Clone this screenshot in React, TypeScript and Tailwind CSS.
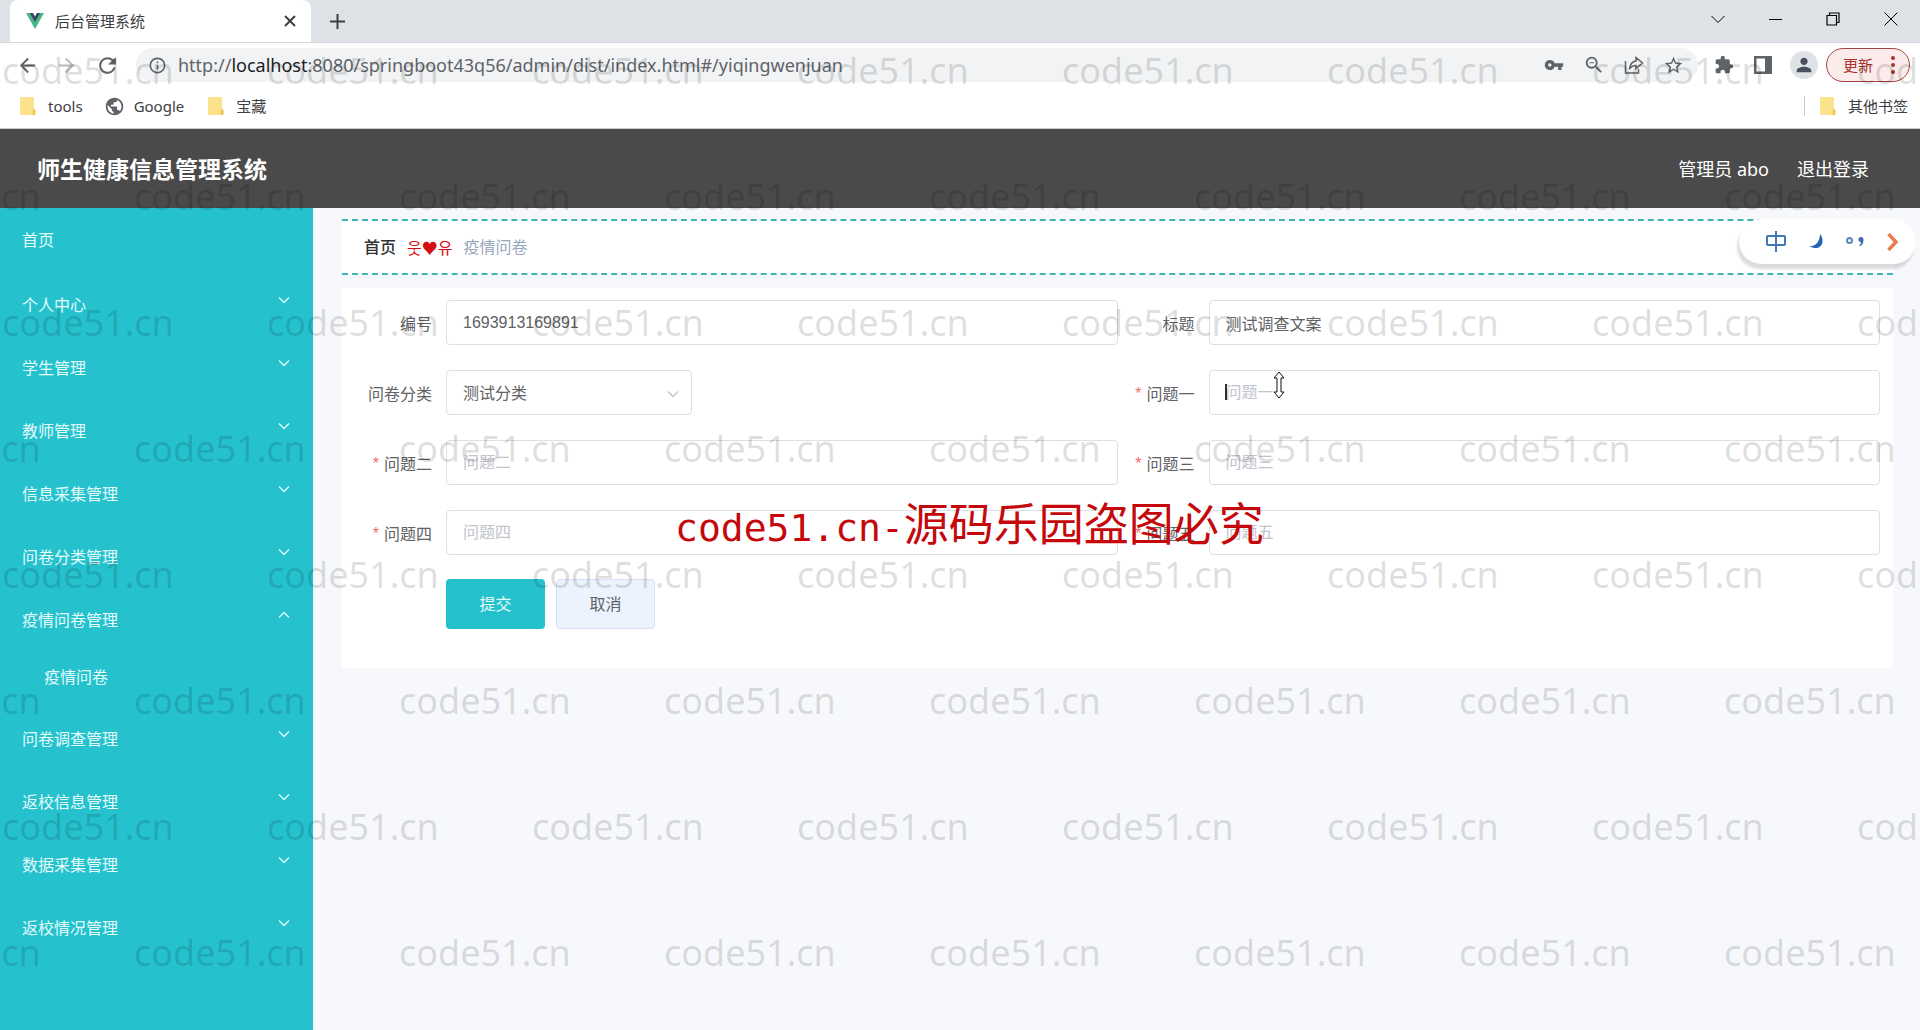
import React from "react";
import {
	MdArrowBack,
	MdArrowForward,
	MdExtension,
	MdInfoOutline,
	MdOutlineZoomOut,
	MdPerson,
	MdPublic,
	MdRefresh,
	MdStarBorder,
	MdVpnKey,
} from "react-icons/md";

const menus = [
	{ name: "个人中心" },
	{ name: "学生管理" },
	{ name: "教师管理" },
	{ name: "信息采集管理" },
	{ name: "问卷分类管理" },
	{ name: "疫情问卷管理", children: ["疫情问卷"] },
	{ name: "问卷调查管理" },
	{ name: "返校信息管理" },
	{ name: "数据采集管理" },
	{ name: "返校情况管理" },
];

function Chevron({ className = "", up = false }) {
	return (
		<svg
			className={className}
			width="12"
			height="8"
			viewBox="0 0 12 8"
			fill="none"
			stroke="currentColor"
			strokeWidth="1.3"
		>
			<path d={up ? "M1 6.5 6 1.5l5 5" : "M1 1.5l5 5 5-5"} />
		</svg>
	);
}

function Folder() {
	return (
		<svg width="16" height="18" viewBox="0 0 16 18">
			<path d="M0 1a1 1 0 0 1 1-1h12a1 1 0 0 1 1 1v11l1.500 1v4a1 1 0 0 1-1 1H1a1 1 0 0 1-1-1z" fill="#fce28d" />
			<path d="M12.500 18v-4.500l1.500-1.500 1.500 1v4a1 1 0 0 1-1 1z" fill="#f0ca5c" />
		</svg>
	);
}

function TabStrip() {
	return (
		<div className="flex h-[43px] items-end border-b border-[#d5d8dc] bg-[#dee1e6] pl-[10px] text-[#3c4043]">
			<div className="flex h-[42px] w-[301px] items-center rounded-t-lg bg-white pr-[11px] pl-4">
				<svg width="18" height="16" viewBox="0 0 18 16">
					<path d="M0 0h3.600L9 9.400 14.400 0H18L9 16z" fill="#42b883" />
					<path d="M3.600 0H7l2 3.500L11 0h3.400L9 9.400z" fill="#35495e" />
				</svg>
				<span className="ml-[11px] flex-1 text-[15px] leading-5">后台管理系统</span>
				<button aria-label="关闭标签页" className="p-1">
					<svg width="12" height="12" viewBox="0 0 12 12" stroke="currentColor" strokeWidth="2">
						<path d="M1 1l10 10M11 1 1 11" />
					</svg>
				</button>
			</div>
			<button aria-label="新标签页" className="mb-[13px] ml-[19px]">
				<svg width="15" height="15" viewBox="0 0 15 15" stroke="currentColor" strokeWidth="2">
					<path d="M7.500 0v15M0 7.500h15" />
				</svg>
			</button>
			<div className="mb-4 ml-auto flex gap-11 pr-[22px] text-black">
				<button aria-label="搜索标签页">
					<svg width="14" height="14" viewBox="0 0 14 14" fill="none" stroke="currentColor">
						<path d="M.5 4 7 10.500 13.500 4" />
					</svg>
				</button>
				<button aria-label="最小化">
					<svg width="13" height="14" viewBox="0 0 13 14" stroke="currentColor">
						<path d="M0 7.500h13" />
					</svg>
				</button>
				<button aria-label="还原">
					<svg width="14" height="14" viewBox="0 0 14 14" fill="none" stroke="currentColor" strokeWidth="1.200">
						<path d="M1 3.500h9.500V13H1zM3.500 3.500V1H13v9.500h-2.500" />
					</svg>
				</button>
				<button aria-label="关闭">
					<svg width="14" height="14" viewBox="0 0 14 14" stroke="currentColor">
						<path d="M.5.5l13 13M13.500.5l-13 13" />
					</svg>
				</button>
			</div>
		</div>
	);
}

function Toolbar() {
	return (
		<div className="flex h-11 items-center pr-[10px] pl-4 text-[#5f6368]">
			<button aria-label="后退">
				<MdArrowBack size={23} />
			</button>
			<button aria-label="前进" className="ml-4 text-[#b9bbbe]">
				<MdArrowForward size={23} />
			</button>
			<button aria-label="刷新" className="ml-[17px]">
				<MdRefresh size={25} />
			</button>
			<div className="ml-4 flex h-[34px] flex-1 items-center rounded-full bg-[#f1f3f4] pr-[14px] pl-3">
				<MdInfoOutline size={19} />
				<p className="ml-[11px] flex-1 text-[18px] leading-6">
					http://<span className="text-[#202124]">localhost</span>
					:8080/springboot43q56/admin/dist/index.html#/yiqingwenjuan
				</p>
				<div className="flex items-center gap-[19px]">
					<MdVpnKey size={20} />
					<MdOutlineZoomOut size={22} />
					<svg width="20" height="20" viewBox="0 0 20 20" fill="none" stroke="currentColor" strokeWidth="1.500">
						<path d="M1.500 6v12h13v-4" />
						<path d="M12 2.500 18.500 8 12 13.500v-3c-3 0-5 1-6.500 3.500.5-4.500 2.500-7.500 6.500-8z" />
					</svg>
					<MdStarBorder size={21} />
				</div>
			</div>
			<button aria-label="扩展程序" className="ml-4">
				<MdExtension size={20} />
			</button>
			<button aria-label="侧边栏" className="ml-5">
				<svg width="18" height="18" viewBox="0 0 18 18">
					<path d="M0 0h18v18H0zM2.500 2.500v13H11v-13z" fill="currentColor" fillRule="evenodd" />
				</svg>
			</button>
			<button
				aria-label="用户"
				className="ml-[18px] flex size-7 items-center justify-center rounded-full bg-[#dee1e6] text-[#47505c]"
			>
				<MdPerson size={22} />
			</button>
			<button className="ml-2 flex h-[34px] w-[84px] items-center justify-between rounded-full border border-[#a8443f] bg-[#fbeceb] pr-[14px] pl-4 text-[15px] text-[#a8322c]">
				更新
				<svg width="4" height="18" viewBox="0 0 4 18" fill="currentColor">
					<circle cx="2" cy="2" r="2" />
					<circle cx="2" cy="9" r="2" />
					<circle cx="2" cy="16" r="2" />
				</svg>
			</button>
		</div>
	);
}

function Bookmarks() {
	return (
		<div className="flex h-[42px] items-center border-b border-[#c8c8c8] pr-3 pb-[3px] pl-5 text-[15px] leading-5 text-[#3c4043]">
			<a href="#tools" className="flex items-center gap-3">
				<Folder />
				tools
			</a>
			<a href="#google" className="ml-[21px] flex items-center gap-[9px]">
				<MdPublic size={21} className="text-[#5f6368]" />
				Google
			</a>
			<a href="#treasure" className="ml-6 flex items-center gap-3">
				<Folder />
				宝藏
			</a>
			<a
				href="#other"
				className="ml-auto flex items-center gap-3 border-l border-[#c8cacd] pl-[15px]"
			>
				<Folder />
				其他书签
			</a>
		</div>
	);
}

function Sidebar() {
	return (
		<nav className="w-[313px] shrink-0 bg-[#25c2ce] text-base leading-6 text-[#e4fafb]">
			<a href="#/" className="flex h-[65px] items-center pb-0.5 pl-[22px]">
				首页
			</a>
			{menus.map((menu) => (
				<div key={menu.name}>
					<button className="flex h-[63px] w-full items-center justify-between pr-[23px] pl-[22px]">
						{menu.name}
						<Chevron className="mb-[10px]" up={!!menu.children} />
					</button>
					{menu.children?.map((child) => (
						<a
							key={child}
							href="#/yiqingwenjuan"
							className="flex h-14 items-center pb-1 pl-11"
						>
							{child}
						</a>
					))}
				</div>
			))}
		</nav>
	);
}

type FieldProps = {
	id: string;
	label: string;
	required?: boolean;
	children: React.ReactNode;
};

function Field({ id, label, required, children }: FieldProps) {
	return (
		<div className="flex h-[45px]">
			<label
				htmlFor={id}
				className="flex w-[91px] shrink-0 items-center justify-end gap-[5px] pt-[2px] pr-[14px] whitespace-nowrap"
			>
				{required && (
					<span className="font-['Liberation_Sans',sans-serif] text-[#f56c6c]">*</span>
				)}
				{label}
			</label>
			<div className="relative flex-1">{children}</div>
		</div>
	);
}

function TextInput({ id, value, placeholder }: { id: string; value?: string; placeholder?: string }) {
	return (
		<input
			id={id}
			type="text"
			defaultValue={value}
			placeholder={placeholder}
			className="h-full w-full rounded border border-[#dcdfe6] bg-white px-4 font-['Liberation_Sans','Noto_Sans_CJK_SC',sans-serif] outline-none placeholder:text-[#c0c4cc]"
		/>
	);
}

function SurveyForm() {
	return (
		<form
			className="mt-[13px] bg-white px-[13px] pt-3 pb-[39px] text-base leading-6 text-[#606266]"
			onSubmit={(e) => e.preventDefault()}
		>
			<div className="grid grid-cols-2 gap-y-[25px]">
				<Field id="uuid" label="编号">
					<TextInput id="uuid" value="1693913169891" />
				</Field>
				<Field id="title" label="标题">
					<TextInput id="title" value="测试调查文案" />
				</Field>
				<Field id="type" label="问卷分类">
					<div className="relative h-full w-[246px]">
						<select
							id="type"
							className="h-full w-full appearance-none rounded border border-[#dcdfe6] bg-white px-4 outline-none"
						>
							<option>测试分类</option>
						</select>
						<Chevron className="pointer-events-none absolute top-5 right-[13px] text-[#c0c4cc]" />
					</div>
				</Field>
				<Field id="q1" label="问题一" required>
					<TextInput id="q1" placeholder="问题一" />
					<span className="absolute top-[14px] left-4 h-4 w-0.5 bg-[#303133]" />
					{/* resize pointer */}
					<svg
						className="absolute top-px left-16"
						width="12"
						height="28"
						viewBox="0 0 12 28"
						fill="#fff"
						stroke="#111"
					>
						<path d="M6 1l5 6H8v14h3l-5 6-5-6h3V7H1z" />
					</svg>
				</Field>
				<Field id="q2" label="问题二" required>
					<TextInput id="q2" placeholder="问题二" />
				</Field>
				<Field id="q3" label="问题三" required>
					<TextInput id="q3" placeholder="问题三" />
				</Field>
				<Field id="q4" label="问题四" required>
					<TextInput id="q4" placeholder="问题四" />
				</Field>
				<Field id="q5" label="问题五" required>
					<TextInput id="q5" placeholder="问题五" />
				</Field>
			</div>
			<div className="mt-6 flex gap-[11px] pl-[91px]">
				<button
					type="submit"
					className="h-[50px] w-[99px] rounded bg-[#25c2ce] text-[#e4fafb]"
				>
					提交
				</button>
				<button
					type="button"
					className="h-[50px] w-[99px] rounded border border-[#d9dff0] bg-[#ebf4fe]"
				>
					取消
				</button>
			</div>
		</form>
	);
}

// floating input method bar
function ImeBar() {
	return (
		<div className="absolute top-[219px] right-1 flex h-[45px] w-[177px] items-center justify-between rounded-full bg-white pr-[17px] pl-[27px] shadow-[-2px_5px_3px_rgba(0,0,0,0.14)]">
			<svg width="20" height="21" viewBox="0 0 20 21" fill="none" stroke="#3f78b8" strokeWidth="2">
				<rect x="1" y="5" width="18" height="9" rx="1" />
				<path d="M10 0v21" />
			</svg>
			<svg width="14" height="16" viewBox="0 0 14 16" fill="#2563b8">
				<path d="M11 0c6 7 1 19-11 12C6 13 11 8 11 0z" />
			</svg>
			<svg width="18" height="11" viewBox="0 0 18 11">
				<circle cx="3.500" cy="4.500" r="2.500" fill="none" stroke="#5b86bd" strokeWidth="2" />
				<path d="M12.500 3.500a2.500 2.500 0 1 1 5 0c0 4-1.500 6-4 7v-1.500c1-.6 1.500-1.500 1.500-3-1.500 0-2.500-1-2.500-2.500z" fill="#3a6aab" />
			</svg>
			<svg width="12" height="18" viewBox="0 0 12 18" fill="none" stroke="#ea7b51" strokeWidth="3.500">
				<path d="M1.500 1 9 9l-7.500 8" />
			</svg>
		</div>
	);
}

function Watermark() {
	return (
		<div
			aria-hidden="true"
			className="pointer-events-none absolute inset-0 overflow-hidden pt-[46px] font-['Noto_Sans',sans-serif] text-4xl text-black/14"
		>
			{Array.from({ length: 8 }, (_, row) => (
				<div
					key={row}
					className={`flex h-[126px] ${row % 2 ? "-ml-[131px]" : "ml-0.5"}`}
				>
					{Array.from({ length: 9 }, (_, col) => (
						<span key={col} className="w-[265px] shrink-0 leading-[50px]">
							code51.cn
						</span>
					))}
				</div>
			))}
		</div>
	);
}

export default function App() {
	return (
		<div className="relative flex min-h-screen flex-col overflow-hidden bg-white font-['Noto_Sans','Noto_Sans_CJK_SC',sans-serif]">
			<TabStrip />
			<Toolbar />
			<Bookmarks />
			<header className="flex h-[79px] items-center bg-[#4a4a4a] pr-[51px] pl-[37px] text-lg leading-7 text-white">
				<h1 className="text-[23px] font-bold">师生健康信息管理系统</h1>
				<span className="ml-auto">管理员 abo</span>
				<a href="#/login" className="ml-7">
					退出登录
				</a>
			</header>
			<div className="flex flex-1">
				<Sidebar />
				<main className="flex-1 bg-[#f6f8fb] pt-[11px] pr-[27px] pl-[29px]">
					<div className="flex h-14 items-center gap-[11px] border-y-2 border-dashed border-[#3fb5b5] bg-white px-[22px] text-base leading-6">
						<a href="#/" className="font-medium text-[#303133]">
							首页
						</a>
						<span className="font-['Noto_Sans_CJK_KR',sans-serif] text-[#d60d12]">웃♥유</span>
						<span className="text-[#97a8be]">疫情问卷</span>
					</div>
					<SurveyForm />
				</main>
			</div>
			<ImeBar />
			<Watermark />
			<p className="pointer-events-none absolute inset-x-0 top-[494px] pl-[675px] text-[45px] leading-[60px] whitespace-nowrap text-[#c4080c]">
				<span className="font-['DejaVu_Sans_Mono',monospace] text-[38px]">code51.cn-</span>
				源码乐园盗图必究
			</p>
		</div>
	);
}
